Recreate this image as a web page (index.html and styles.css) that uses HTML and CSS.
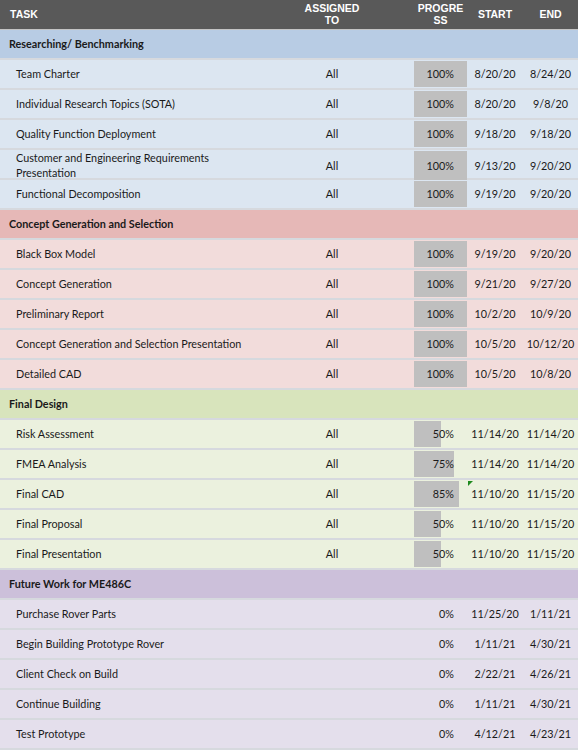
FILE: index.html
```html
<!DOCTYPE html>
<html>
<head>
<meta charset="utf-8">
<link rel="stylesheet" href="styles.css">
</head>
<body>
<div class="sheet">
  <div class="row head">
    <div class="c task">TASK</div>
    <div class="c asg">ASSIGNED<br>TO</div>
    <div class="c gap"></div>
    <div class="c prog">PROGRE<br>SS</div>
    <div class="c date">START</div>
    <div class="c date">END</div>
  </div>

  <div class="row sec blue"><div class="c title">Researching/ Benchmarking</div></div>
  <div class="row item lblue"><div class="c task">Team Charter</div><div class="c asg">All</div><div class="c gap"></div><div class="c prog"><span class="bar" style="width:100%"></span><span class="pct">100%</span></div><div class="c date">8/20/20</div><div class="c date">8/24/20</div></div>
  <div class="row item lblue"><div class="c task">Individual Research Topics (SOTA)</div><div class="c asg">All</div><div class="c gap"></div><div class="c prog"><span class="bar" style="width:100%"></span><span class="pct">100%</span></div><div class="c date">8/20/20</div><div class="c date">9/8/20</div></div>
  <div class="row item lblue"><div class="c task">Quality Function Deployment</div><div class="c asg">All</div><div class="c gap"></div><div class="c prog"><span class="bar" style="width:100%"></span><span class="pct">100%</span></div><div class="c date">9/18/20</div><div class="c date">9/18/20</div></div>
  <div class="row item lblue"><div class="c task wrap">Customer and Engineering Requirements Presentation</div><div class="c asg">All</div><div class="c gap"></div><div class="c prog"><span class="bar" style="width:100%"></span><span class="pct">100%</span></div><div class="c date">9/13/20</div><div class="c date">9/20/20</div></div>
  <div class="row item lblue"><div class="c task">Functional Decomposition</div><div class="c asg">All</div><div class="c gap"></div><div class="c prog"><span class="bar" style="width:100%"></span><span class="pct">100%</span></div><div class="c date">9/19/20</div><div class="c date">9/20/20</div></div>

  <div class="row sec pink"><div class="c title">Concept Generation and Selection</div></div>
  <div class="row item lpink"><div class="c task">Black Box Model</div><div class="c asg">All</div><div class="c gap"></div><div class="c prog"><span class="bar" style="width:100%"></span><span class="pct">100%</span></div><div class="c date">9/19/20</div><div class="c date">9/20/20</div></div>
  <div class="row item lpink"><div class="c task">Concept Generation</div><div class="c asg">All</div><div class="c gap"></div><div class="c prog"><span class="bar" style="width:100%"></span><span class="pct">100%</span></div><div class="c date">9/21/20</div><div class="c date">9/27/20</div></div>
  <div class="row item lpink"><div class="c task">Preliminary Report</div><div class="c asg">All</div><div class="c gap"></div><div class="c prog"><span class="bar" style="width:100%"></span><span class="pct">100%</span></div><div class="c date">10/2/20</div><div class="c date">10/9/20</div></div>
  <div class="row item lpink"><div class="c task">Concept Generation and Selection Presentation</div><div class="c asg">All</div><div class="c gap"></div><div class="c prog"><span class="bar" style="width:100%"></span><span class="pct">100%</span></div><div class="c date">10/5/20</div><div class="c date">10/12/20</div></div>
  <div class="row item lpink"><div class="c task">Detailed CAD</div><div class="c asg">All</div><div class="c gap"></div><div class="c prog"><span class="bar" style="width:100%"></span><span class="pct">100%</span></div><div class="c date">10/5/20</div><div class="c date">10/8/20</div></div>

  <div class="row sec green"><div class="c title">Final Design</div></div>
  <div class="row item lgreen"><div class="c task">Risk Assessment</div><div class="c asg">All</div><div class="c gap"></div><div class="c prog"><span class="bar" style="width:50%"></span><span class="pct">50%</span></div><div class="c date">11/14/20</div><div class="c date">11/14/20</div></div>
  <div class="row item lgreen"><div class="c task">FMEA Analysis</div><div class="c asg">All</div><div class="c gap"></div><div class="c prog"><span class="bar" style="width:75%"></span><span class="pct">75%</span></div><div class="c date">11/14/20</div><div class="c date">11/14/20</div></div>
  <div class="row item lgreen"><div class="c task">Final CAD</div><div class="c asg">All</div><div class="c gap"></div><div class="c prog"><span class="bar" style="width:85%"></span><span class="pct">85%</span></div><div class="c date flag">11/10/20</div><div class="c date">11/15/20</div></div>
  <div class="row item lgreen"><div class="c task">Final Proposal</div><div class="c asg">All</div><div class="c gap"></div><div class="c prog"><span class="bar" style="width:50%"></span><span class="pct">50%</span></div><div class="c date">11/10/20</div><div class="c date">11/15/20</div></div>
  <div class="row item lgreen"><div class="c task">Final Presentation</div><div class="c asg">All</div><div class="c gap"></div><div class="c prog"><span class="bar" style="width:50%"></span><span class="pct">50%</span></div><div class="c date">11/10/20</div><div class="c date">11/15/20</div></div>

  <div class="row sec purple"><div class="c title">Future Work for ME486C</div></div>
  <div class="row item lpurple"><div class="c task">Purchase Rover Parts</div><div class="c asg"></div><div class="c gap"></div><div class="c prog"><span class="pct">0%</span></div><div class="c date">11/25/20</div><div class="c date">1/11/21</div></div>
  <div class="row item lpurple"><div class="c task">Begin Building Prototype Rover</div><div class="c asg"></div><div class="c gap"></div><div class="c prog"><span class="pct">0%</span></div><div class="c date">1/11/21</div><div class="c date">4/30/21</div></div>
  <div class="row item lpurple"><div class="c task">Client Check on Build</div><div class="c asg"></div><div class="c gap"></div><div class="c prog"><span class="pct">0%</span></div><div class="c date">2/22/21</div><div class="c date">4/26/21</div></div>
  <div class="row item lpurple"><div class="c task">Continue Building</div><div class="c asg"></div><div class="c gap"></div><div class="c prog"><span class="pct">0%</span></div><div class="c date">1/11/21</div><div class="c date">4/30/21</div></div>
  <div class="row item lpurple"><div class="c task">Test Prototype</div><div class="c asg"></div><div class="c gap"></div><div class="c prog"><span class="pct">0%</span></div><div class="c date">4/12/21</div><div class="c date">4/23/21</div></div>
</div>
</body>
</html>
```

FILE: styles.css
```css
html, body {
  margin: 0;
  padding: 0;
  background: #ffffff;
}
.sheet {
  width: 578px;
  font-family: Lato, "Liberation Sans", sans-serif;
  font-size: 10.8px;
  color: #1a1a1a;
}
.row {
  display: grid;
  grid-template-columns: 300px 64px 50px 53px 56px 55px;
  height: 28px;
  border-bottom: 2px solid #d6d9de;
}
.c {
  display: flex;
  align-items: center;
  min-width: 0;
}
.head {
  background: #595959;
  color: #ffffff;
  font-family: "Liberation Sans", Arial, sans-serif;
  font-weight: bold;
  font-size: 10.5px;
  line-height: 12px;
  height: 29px;
  border-bottom: 1px solid #c4c4c4;
}
.head .c { justify-content: center; text-align: center; padding-bottom: 2px; }
.head .task { justify-content: flex-start; padding-left: 10px; }
.sec { display: flex; }
.sec .title {
  padding-left: 9px;
  padding-bottom: 2px;
  font-weight: bold;
}
.blue { background: #b8cce4; }
.pink { background: #e6b8b7; }
.green { background: #d8e4bc; }
.purple { background: #ccc0da; }
.lblue { background: #dce6f1; }
.lpink { background: #f2dcdb; }
.lgreen { background: #ebf1de; }
.lpurple { background: #e4dfec; }
.item .c { padding-bottom: 1px; }
.item .task {
  padding-left: 16px;
  padding-right: 50px;
  line-height: 15px;
}
.item .asg, .item .date { justify-content: center; }
.item .prog {
  position: relative;
  justify-content: flex-end;
  padding-right: 13px;
}
.head .prog { padding-right: 0; }
.item .prog .bar {
  position: absolute;
  left: 0;
  top: 1px;
  bottom: 1px;
  background: #bfbfbf;
}
.pct { position: relative; }
.flag { position: relative; }
.flag::before {
  content: "";
  position: absolute;
  left: 1px;
  top: 1px;
  border-top: 5px solid #1e8a1e;
  border-right: 5px solid transparent;
}
```
